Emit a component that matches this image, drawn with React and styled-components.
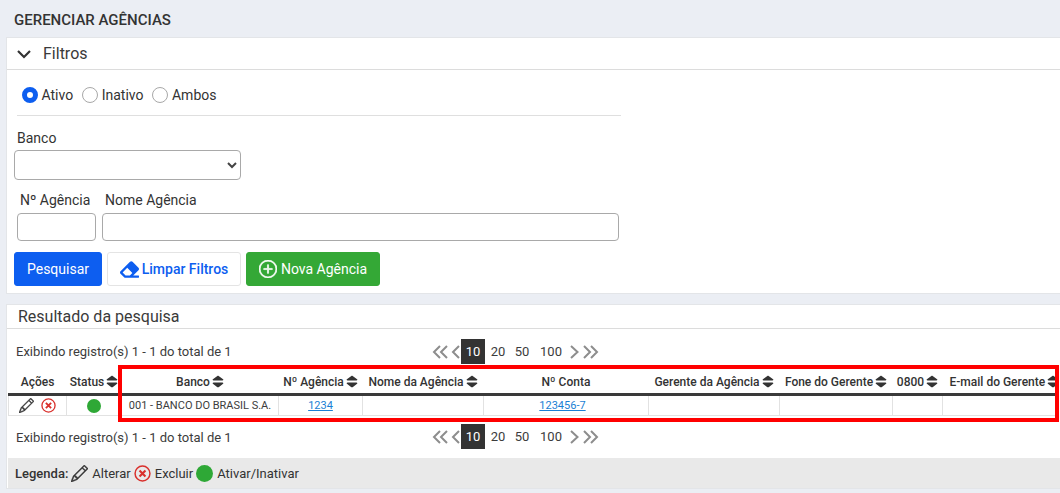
import React from "react";
import styled, { createGlobalStyle } from "styled-components";
import { FaEraser, FaSort } from "react-icons/fa";
import { BsPencil, BsPlusCircle } from "react-icons/bs";

const GlobalStyle = createGlobalStyle`
  html, body {
    margin: 0;
    padding: 0;
    background: #ebeef4;
    overflow: hidden;
  }
  body {
    font-family: Roboto, "Liberation Sans", sans-serif;
    color: #333;
  }
`;

const Page = styled.div`
  width: 1060px;
  height: 493px;
  padding: 0 0 0 6px;
  box-sizing: border-box;
  overflow: hidden;
`;

const Title = styled.h1`
  margin: 0;
  height: 37px;
  padding-left: 8px;
  font-size: 15px;
  font-weight: 500;
  line-height: 40px;
  color: #333;
`;

const Panel = styled.section`
  background: #fff;
  border: 1px solid #e3e5e8;
  border-right: 0;
  box-sizing: border-box;
  height: ${(p) => p.$height}px;
  margin-bottom: ${(p) => p.$gap || 0}px;
  position: relative;
`;

const PanelHeader = styled.header`
  display: flex;
  align-items: center;
  gap: 12px;
  height: ${(p) => p.$height}px;
  padding-left: ${(p) => p.$left}px;
  border-bottom: 1px solid #dcdcdc;
  font-size: 16px;
  color: #3a3a3a;
`;

const FilterBody = styled.div`
  padding: 13px 0 0 7px;
`;

const RadioRow = styled.div`
  display: flex;
  align-items: center;
  width: 599px;
  height: 22px;
  margin: 0 0 13px 3px;
  padding: 1px 0 9px 5px;
  border-bottom: 1px solid #dfdfdf;
  gap: 9px;
  font-size: 14px;
`;

const RadioLabel = styled.span`
  display: flex;
  align-items: center;
  gap: 3.5px;
`;

const RadioDot = styled.span`
  width: 16px;
  height: 16px;
  border-radius: 50%;
  box-sizing: border-box;
  border: ${(p) => (p.$on ? "5px solid #0d5ef0" : "1px solid #a8a8a8")};
  background: #fff;
`;

const FieldLabel = styled.label`
  display: block;
  font-size: 14px;
  line-height: 18px;
  margin-left: 3px;
  margin-bottom: ${(p) => p.$bottom}px;
`;

const SelectBox = styled.select`
  display: block;
  width: 227px;
  height: 30px;
  background: #fff;
  color: #444;
  border: 1px solid #a9a9a9;
  border-radius: 4px;
`;

const FieldRow = styled.div`
  display: flex;
  gap: 6px;
  margin: 11px 0 11px 3px;
`;

const Field = styled.div`
  display: flex;
  flex-direction: column;
`;

const TextInput = styled.input`
  display: block;
  width: ${(p) => p.$width}px;
  height: 28px;
  box-sizing: border-box;
  background: #fff;
  border: 1px solid #a9a9a9;
  border-radius: 4px;
`;

const ButtonRow = styled.div`
  display: flex;
  gap: 5px;
`;

const Button = styled.button`
  display: flex;
  align-items: center;
  justify-content: center;
  gap: ${(p) => p.$gap || 4}px;
  width: ${(p) => p.$width}px;
  height: 34px;
  padding: 0;
  border-radius: 3px;
  font-family: inherit;
  font-size: 14px;
  font-weight: ${(p) => p.$weight || 400};
  color: ${(p) => p.$color};
  background: ${(p) => p.$bg};
  border: 1px solid ${(p) => p.$border};
`;

const PlusIcon = styled(BsPlusCircle)`
  stroke: currentColor;
  stroke-width: 0.6;
`;

const InfoRow = styled.div`
  display: flex;
  position: relative;
  box-sizing: border-box;
  height: ${(p) => p.$height}px;
  padding: ${(p) => p.$top || 0}px 0 0 9px;
  align-items: center;
  font-size: 13px;
  color: #3c3c3c;
`;

const Pager = styled.div`
  position: absolute;
  left: 425px;
  top: ${(p) => p.$top}px;
  display: flex;
  align-items: center;
  height: 25px;
  font-size: 13px;
`;

const PageArrow = styled.svg`
  width: ${(p) => p.$w}px;
  height: 16px;
  fill: none;
  stroke: #8d8d8d;
  stroke-width: 2;
  margin-left: ${(p) => p.$before || 0}px;
  margin-right: ${(p) => p.$gap || 0}px;
`;

const PageItem = styled.span`
  display: flex;
  align-items: center;
  justify-content: center;
  height: 25px;
  width: ${(p) => p.$width}px;
  color: ${(p) => (p.$active ? "#fff" : "#3c3c3c")};
  background: ${(p) => (p.$active ? "#333" : "transparent")};
`;

const TableWrap = styled.div`
  position: relative;
  width: 1048px;
  margin-left: 1px;
`;

const Table = styled.table`
  width: 1048px;
  table-layout: fixed;
  border-collapse: collapse;
  font-size: 12px;
`;

const HeadCell = styled.th`
  height: 23px;
  padding: 0 0 0 ${(p) => p.$left || 0}px;
  font-weight: 500;
  text-align: center;
  white-space: nowrap;
  color: #333;
  border-bottom: 3px solid #3a3a3a;
`;

const Cell = styled.td`
  height: 19px;
  padding: 0 ${(p) => p.$right || 0}px 0 0;
  text-align: center;
  font-size: 11px;
  white-space: nowrap;
  color: #3c3c3c;
  border: 1px solid #e2e2e2;
  border-top: 0;
`;

const SortIcon = styled(FaSort)`
  width: 12px;
  height: 15px;
  vertical-align: -3px;
  margin-left: 2px;
  color: #333;
`;

const CellLink = styled.a`
  color: #1a7fd4;
  text-decoration: underline;
`;

const Actions = styled.span`
  display: inline-flex;
  align-items: center;
  gap: 7px;
  vertical-align: middle;
`;

const PencilIcon = styled(BsPencil)`
  stroke: currentColor;
  stroke-width: 0.4;
  color: #333;
`;

const StatusDot = styled.span`
  display: inline-block;
  width: ${(p) => p.$size}px;
  height: ${(p) => p.$size}px;
  border-radius: 50%;
  background: #2ea836;
  vertical-align: middle;
`;

const Highlight = styled.div`
  position: absolute;
  left: 110px;
  top: -5px;
  width: 941px;
  height: 57px;
  box-sizing: border-box;
  border: 4px solid #f00;
  pointer-events: none;
`;

const Legend = styled.footer`
  display: flex;
  align-items: center;
  height: 30px;
  margin-left: 1px;
  padding-left: 7px;
  background: #e9e9e9;
  font-size: 13px;
  color: #333;
  gap: 3px;
`;

const LegendTitle = styled.strong`
  font-weight: 500;
`;

const LegendItem = styled.span`
  display: inline-flex;
  align-items: center;
  gap: 4px;
`;

const DeleteIcon = ({ size }) => (
  <svg width={size} height={size} viewBox="0 0 16 16" fill="none" stroke="#d9302c">
    <circle cx="8" cy="8" r="7" strokeWidth="1.4" />
    <path d="M5.2 5.2l5.6 5.6M10.8 5.2l-5.6 5.6" strokeWidth="2" />
  </svg>
);

const PagerControls = ({ top }) => (
  <Pager $top={top}>
    <PageArrow $w={17} $gap={2} viewBox="0 0 17 16">
      <path d="M8 2L2 8l6 6M15 2L9 8l6 6" />
    </PageArrow>
    <PageArrow $w={9} $gap={1} viewBox="0 0 9 16">
      <path d="M8 2L2 8l6 6" />
    </PageArrow>
    <PageItem $active $width={24}>10</PageItem>
    <PageItem $width={26}>20</PageItem>
    <PageItem $width={22}>50</PageItem>
    <PageItem $width={36}>100</PageItem>
    <PageArrow $w={9} $before={1} $gap={3} viewBox="0 0 9 16">
      <path d="M1 2l6.5 6-6.5 6" />
    </PageArrow>
    <PageArrow $w={17} viewBox="0 0 17 16">
      <path d="M2 2l6 6-6 6M9 2l6 6-6 6" />
    </PageArrow>
  </Pager>
);

const columns = [
  { label: "Ações", width: 58 },
  { label: "Status", width: 55, sort: true },
  { label: "Banco", width: 157, sort: true },
  { label: "Nº Agência", width: 84, sort: true },
  { label: "Nome da Agência", width: 121, sort: true },
  { label: "Nº Conta", width: 165 },
  { label: "Gerente da Agência", width: 131, sort: true },
  { label: "Fone do Gerente", width: 113, sort: true },
  { label: "0800", width: 50, sort: true },
  { label: "E-mail do Gerente", width: 114, sort: true, left: 7 },
];

const App = () => (
  <Page>
    <GlobalStyle />
    <Title>GERENCIAR AGÊNCIAS</Title>
    <Panel $height={257} $gap={10}>
      <PanelHeader $height={31} $left={10}>
        <svg width="14" height="14" viewBox="0 0 14 14" fill="none" stroke="#333" strokeWidth="2.2">
          <path d="M1 4l6 6 6-6" />
        </svg>
        Filtros
      </PanelHeader>
      <FilterBody>
        <RadioRow>
          <RadioLabel><RadioDot $on />Ativo</RadioLabel>
          <RadioLabel><RadioDot />Inativo</RadioLabel>
          <RadioLabel><RadioDot />Ambos</RadioLabel>
        </RadioRow>
        <FieldLabel $bottom={3}>Banco</FieldLabel>
        <SelectBox />
        <FieldRow>
          <Field>
            <FieldLabel $bottom={4}>Nº Agência</FieldLabel>
            <TextInput $width={79} />
          </Field>
          <Field>
            <FieldLabel $bottom={4}>Nome Agência</FieldLabel>
            <TextInput $width={517} />
          </Field>
        </FieldRow>
        <ButtonRow>
          <Button $width={88} $bg="#0d5ef0" $border="#0d5ef0" $color="#fff">Pesquisar</Button>
          <Button $width={134} $bg="#fff" $border="#e4e4e4" $color="#0d5ef0" $weight={500} $gap={3}>
            <FaEraser size={19} />
            Limpar Filtros
          </Button>
          <Button $width={134} $bg="#34a836" $border="#34a836" $color="#fff">
            <PlusIcon size={18} />
            Nova Agência
          </Button>
        </ButtonRow>
      </FilterBody>
    </Panel>
    <Panel $height={185}>
      <PanelHeader $height={23} $left={11}>Resultado da pesquisa</PanelHeader>
      <InfoRow $height={41} $top={3}>
        Exibindo registro(s) 1 - 1 do total de 1
        <PagerControls top={10} />
      </InfoRow>
      <TableWrap>
        <Highlight />
        <Table>
          <colgroup>
            {columns.map((c) => (
              <col key={c.label} width={c.width} />
            ))}
          </colgroup>
          <thead>
            <tr>
              {columns.map((c) => (
                <HeadCell key={c.label} $left={c.left}>
                  {c.label}
                  {c.sort && <SortIcon preserveAspectRatio="none" />}
                </HeadCell>
              ))}
            </tr>
          </thead>
          <tbody>
            <tr>
              <Cell>
                <Actions>
                  <PencilIcon size={15} />
                  <DeleteIcon size={15} />
                </Actions>
              </Cell>
              <Cell><StatusDot $size={14} /></Cell>
              <Cell>001 - BANCO DO BRASIL S.A.</Cell>
              <Cell><CellLink>1234</CellLink></Cell>
              <Cell />
              <Cell $right={7}><CellLink>123456-7</CellLink></Cell>
              <Cell />
              <Cell />
              <Cell />
              <Cell />
            </tr>
          </tbody>
        </Table>
      </TableWrap>
      <InfoRow $height={42}>
        Exibindo registro(s) 1 - 1 do total de 1
        <PagerControls top={8} />
      </InfoRow>
      <Legend>
        <LegendTitle>Legenda:</LegendTitle>
        <LegendItem><PencilIcon size={17} />Alterar</LegendItem>
        <LegendItem><DeleteIcon size={17} />Excluir</LegendItem>
        <LegendItem><StatusDot $size={17} />Ativar/Inativar</LegendItem>
      </Legend>
    </Panel>
  </Page>
);

export default App;
